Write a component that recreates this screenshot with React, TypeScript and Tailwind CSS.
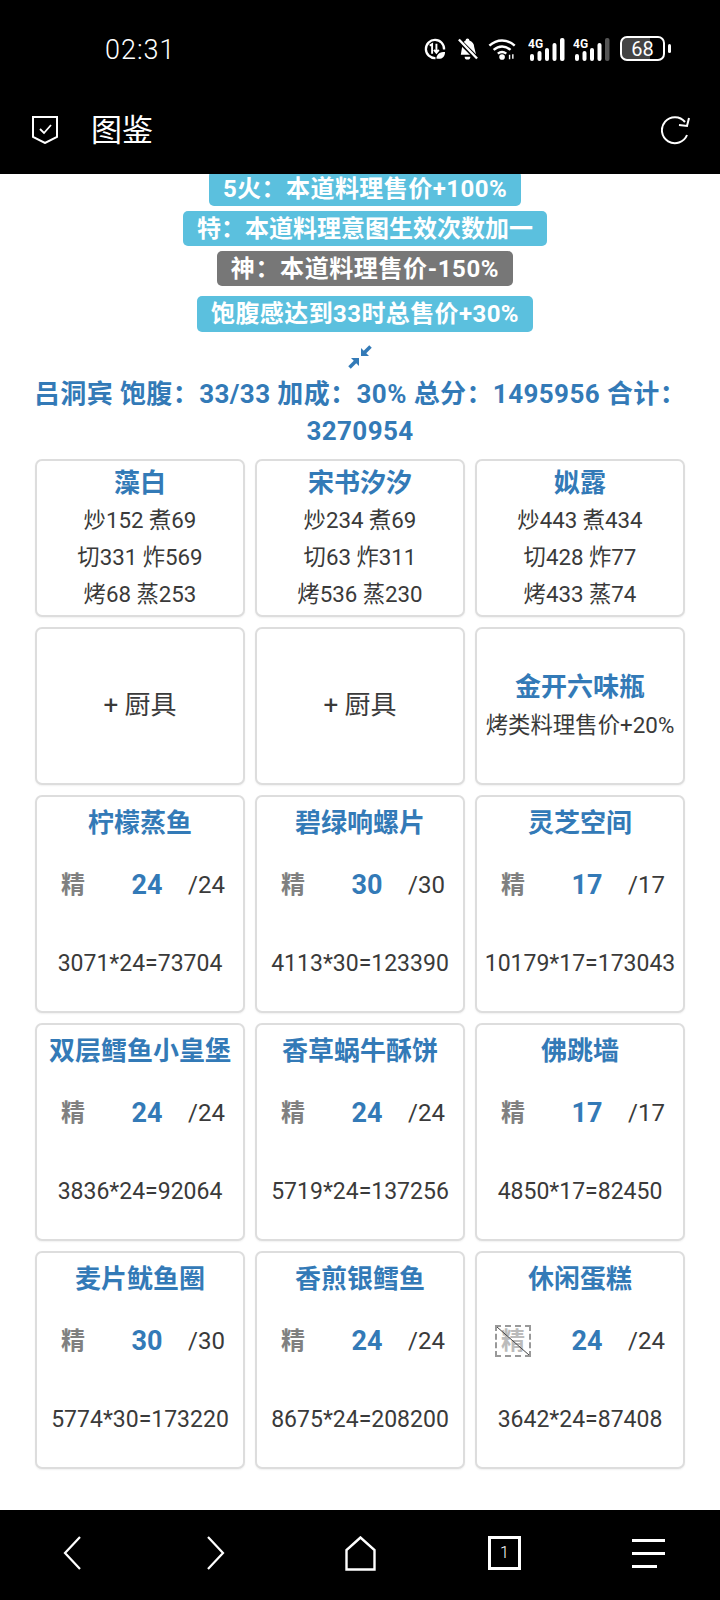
const fontStack = { fontFamily: 'Roboto, "Noto Sans CJK SC", sans-serif' };

const chefs = [
  { name: "藻白", lines: ["炒152 煮69", "切331 炸569", "烤68 蒸253"] },
  { name: "宋书汐汐", lines: ["炒234 煮69", "切63 炸311", "烤536 蒸230"] },
  { name: "姒露", lines: ["炒443 煮434", "切428 炸77", "烤433 蒸74"] },
];

const recipes = [
  { name: "柠檬蒸鱼", count: 24, calc: "3071*24=73704" },
  { name: "碧绿响螺片", count: 30, calc: "4113*30=123390" },
  { name: "灵芝空间", count: 17, calc: "10179*17=173043" },
  { name: "双层鳕鱼小皇堡", count: 24, calc: "3836*24=92064" },
  { name: "香草蜗牛酥饼", count: 24, calc: "5719*24=137256" },
  { name: "佛跳墙", count: 17, calc: "4850*17=82450" },
  { name: "麦片鱿鱼圈", count: 30, calc: "5774*30=173220" },
  { name: "香煎银鳕鱼", count: 24, calc: "8675*24=208200" },
  { name: "休闲蛋糕", count: 24, calc: "3642*24=87408", broken: true },
];

const Signal = ({ dim }: { dim?: boolean }) => (
  <svg width="37" height="24" viewBox="0 0 37 24" className="text-white">
    <text x="0" y="11" fontSize="12" fontWeight="700" fill="currentColor" fontFamily="Roboto">4G</text>
    <rect x="2" y="17" width="4" height="7" rx="2" fill="currentColor" />
    <rect x="9.500" y="14" width="4" height="10" rx="2" fill="currentColor" />
    <rect x="17" y="11" width="4" height="13" rx="2" fill="currentColor" />
    <rect x="24.500" y="6" width="4" height="18" rx="2" fill="currentColor" />
    <rect x="32" y="1" width="4.500" height="23" rx="2" fill={dim ? "#555" : "currentColor"} />
  </svg>
);

const StatusIcons = () => (
  <div className="flex items-center">
    <svg width="23" height="22" viewBox="0 0 24 22" fill="none" stroke="white" strokeWidth="2.400">
      <path d="M13 20.500a9.500 9.500 0 1 1 9-9" />
      <path d="M7 7.500l2.500-1.500v10M14 5.500v9M11.500 12l2.500 3 2.500-3" strokeWidth="2" />
      <path d="M14 21c0-5 4-7 9-7 0 5-3 8-9 7z" fill="white" stroke="none" />
    </svg>
    <svg width="21" height="24" viewBox="0 0 22 24" className="ml-[11px]" fill="white">
      <path d="M11 1a2 2 0 0 1 2 2c3 .8 5 3.500 5 7l2 8H4l2-12c1-1.500 2-2.500 3-3a2 2 0 0 1 2-2z" />
      <path d="M8 20h6a3 3 0 0 1-6 0z" />
      <path d="M1 2l20 20" stroke="black" strokeWidth="5" />
      <path d="M2 2l19 20" stroke="white" strokeWidth="2.500" />
    </svg>
    <svg width="30" height="24" viewBox="0 0 32 24" className="ml-[10px]" fill="none" stroke="white" strokeWidth="2.600">
      <path d="M1.500 8.500c8-7.500 19-7.500 27 0" />
      <path d="M6 13c5.500-5 12.500-5 18 0" />
      <path d="M10.500 17c3-2.500 6-2.500 9 0" />
      <circle cx="15" cy="20.500" r="3" fill="white" stroke="none" />
      <path d="M23 18v5M26.500 17.500v5" strokeWidth="1.500" />
    </svg>
    <div className="ml-[10px]"><Signal /></div>
    <div className="ml-[8px]"><Signal dim /></div>
    <div className="ml-[10px] flex items-center">
      <div className="flex h-[25px] w-[45px] items-center justify-center rounded-[7px] border-2 border-white bg-[linear-gradient(90deg,#444444_68%,#000000_68%)] text-[20px] leading-none text-white">
        68
      </div>
      <div className="ml-[3px] h-[9px] w-[3px] rounded-full bg-white" />
    </div>
  </div>
);

const Pill = ({ text, gray, className }: { text: string; gray?: boolean; className?: string }) => (
  <div
    className={`ml-[10px] flex shrink-0 items-center rounded-[5px] px-[14px] text-[24px] font-bold leading-none text-white ${
      gray ? "bg-[#777777]" : "bg-[#5bc0de]"
    } ${className ?? ""}`}
  >
    {text}
  </div>
);

const Card = ({ children, className }: { children: React.ReactNode; className?: string }) => (
  <div
    className={`rounded-[7px] border-2 border-[#dddddd] bg-white text-center text-[#3a3a3a] shadow-[0_1px_2px_rgba(0,0,0,0.06)] ${className ?? ""}`}
  >
    {children}
  </div>
);

export default function App() {
  return (
    <div style={fontStack} className="flex h-[1600px] w-[720px] flex-col overflow-hidden bg-white">
      <div className="h-[174px] shrink-0 bg-black text-white">
        <div className="flex h-[100px] items-start justify-between pl-[105px] pr-[49px] pt-[36px]">
          <span className="text-[27px] font-light leading-[28px] tracking-[1px]">02:31</span>
          <StatusIcons />
        </div>
        <div className="flex h-[60px] items-center justify-between pl-[32px] pr-[29px]">
          <div className="flex items-center">
            <svg width="26" height="28" viewBox="0 0 26 28" fill="none" stroke="white" strokeWidth="2">
              <path d="M1 1h24v20l-12 6-12-6z" />
              <path d="M8 13l4 4 7-8" strokeWidth="1.800" />
            </svg>
            <span className="ml-[33px] text-[31px] leading-none">图鉴</span>
          </div>
          <svg width="30" height="30" viewBox="0 0 30 30" fill="none" stroke="white" strokeWidth="2">
            <path d="M26 20a13 13 0 1 1-2-13" />
            <path d="M28 3l-2 8-8-1" />
          </svg>
        </div>
      </div>

      <div className="flex min-h-0 flex-1 flex-col items-center overflow-hidden">
        <Pill text="5火：本道料理售价+100%" className="-mt-[3px] h-[35px] tracking-[0.45px]" />
        <Pill text="特：本道料理意图生效次数加一" className="mt-[5px] h-[35px]" />
        <Pill text="神：本道料理售价-150%" gray className="mt-[5px] h-[35px] tracking-[0.6px]" />
        <Pill text="饱腹感达到33时总售价+30%" className="mt-[10px] h-[36px] tracking-[0.4px]" />

        <svg width="24" height="24" viewBox="0 0 24 24" className="mt-[13px] shrink-0" fill="#337ab7" stroke="#337ab7">
          <path d="M22.500 1.500L16 8" strokeWidth="3.500" />
          <path d="M13 3v8h8z" stroke="none" />
          <path d="M1.500 22.500L8 16" strokeWidth="3.500" />
          <path d="M11 21v-8H3z" stroke="none" />
        </svg>

        <div className="mt-[7px] w-[670px] text-center text-[26px] font-bold leading-[37px] tracking-[0.4px] text-[#337ab7]">
          吕洞宾 饱腹：33/33 加成：30% 总分：1495956 合计：3270954
        </div>

        <div className="mt-[9px] grid w-[650px] grid-cols-3 gap-[10px]">
          {chefs.map((c) => (
            <Card key={c.name} className="h-[158px] pt-[4px]">
              <div className="text-[26px] font-bold leading-[37px] text-[#337ab7]">{c.name}</div>
              {c.lines.map((l) => (
                <div key={l} className="text-[22.300px] leading-[37px]">{l}</div>
              ))}
            </Card>
          ))}

          <Card className="flex h-[158px] items-center justify-center pb-[2px] text-[26px]">+ 厨具</Card>
          <Card className="flex h-[158px] items-center justify-center pb-[2px] text-[26px]">+ 厨具</Card>
          <Card className="flex h-[158px] flex-col items-center justify-center">
            <div className="text-[26px] font-bold leading-[38px] text-[#337ab7]">金开六味瓶</div>
            <div className="text-[22.400px] leading-[38px]">烤类料理售价+20%</div>
          </Card>

          {recipes.map((r) => (
            <Card key={r.name} className="h-[218px] pt-[8px]">
              <div className="text-[26px] font-bold leading-[37px] text-[#337ab7]">{r.name}</div>
              <div className="mt-[23px] grid h-[36px] grid-cols-[72px_76px_1fr] items-center">
                <div className="flex justify-center">
                  {r.broken ? (
                    <div className="relative flex h-[32px] w-[36px] items-center justify-center border-2 border-dashed border-[#999999] text-[24px] font-bold text-[#bbbbbb]">
                      精
                      <svg width="36" height="32" viewBox="0 0 36 32" className="absolute left-[-2px] top-[-2px]">
                        <path d="M2 2l32 28" stroke="#444" strokeWidth="1" />
                      </svg>
                    </div>
                  ) : (
                    <span className="text-[24px] font-bold text-[#808080]">精</span>
                  )}
                </div>
                <div className="text-[27px] font-bold text-[#337ab7]">{r.count}</div>
                <div className="pl-[3px] text-left text-[24px]">/{r.count}</div>
              </div>
              <div className="mt-[45px] text-[23px] leading-[36px]">{r.calc}</div>
            </Card>
          ))}
        </div>
      </div>

      <div className="flex h-[90px] shrink-0 items-center bg-black pb-[4px] pl-[63px]">
        <svg width="18" height="34" viewBox="0 0 18 34" fill="none" stroke="white" strokeWidth="2.200"><path d="M17 1L2 17l15 16" /></svg>
        <svg width="18" height="34" viewBox="0 0 18 34" className="ml-[126px]" fill="none" stroke="white" strokeWidth="2.200"><path d="M1 1l15 16L1 33" /></svg>
        <svg width="31" height="35" viewBox="0 0 31 35" className="ml-[120px]" fill="none" stroke="white" strokeWidth="2.400"><path d="M15.500 1.500L1.500 14v19.500h28V14z" /></svg>
        <div className="ml-[112px] flex h-[34px] w-[33px] items-center justify-center border-[3px] border-white text-[16px] font-light leading-none text-white">1</div>
        <div className="ml-[111px] flex w-[33px] flex-col gap-[10px]">
          <div className="h-[3px] w-full bg-white" />
          <div className="h-[3px] w-full bg-white" />
          <div className="h-[3px] w-[25px] bg-white" />
        </div>
      </div>
    </div>
  );
}
